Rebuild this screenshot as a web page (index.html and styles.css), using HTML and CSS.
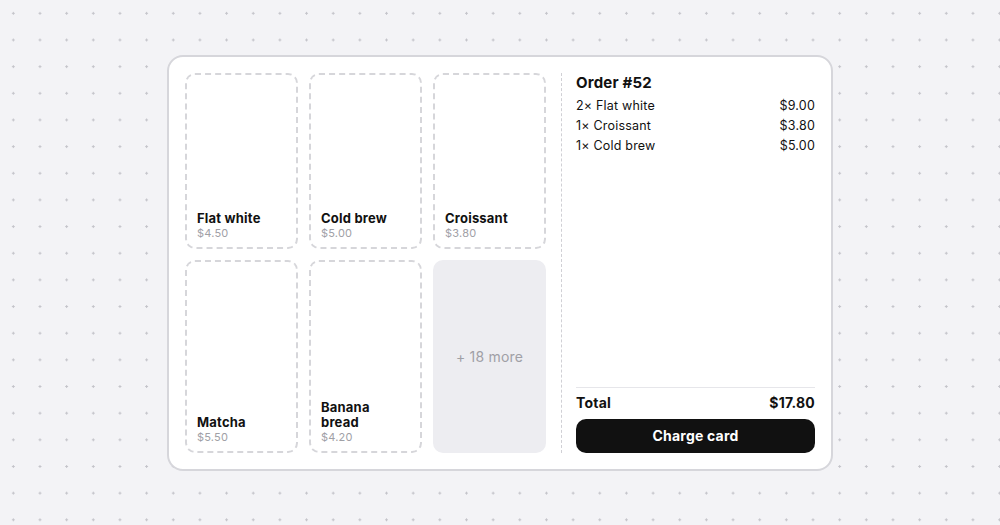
FILE: index.html
```html
<!DOCTYPE html>
<html>
<head>
  <title>POS</title>
  <link rel="stylesheet" href="styles.css">
</head>
<body>
  <div class="pos">
    <div class="tiles">
      <div class="tile"><div class="name">Flat white</div><div class="price">$4.50</div></div>
      <div class="tile"><div class="name">Cold brew</div><div class="price">$5.00</div></div>
      <div class="tile"><div class="name">Croissant</div><div class="price">$3.80</div></div>
      <div class="tile"><div class="name">Matcha</div><div class="price">$5.50</div></div>
      <div class="tile"><div class="name">Banana<br>bread</div><div class="price">$4.20</div></div>
      <div class="tile more">+ 18 more</div>
    </div>

    <div class="order">
      <h2>Order #52</h2>
      <div class="line"><span>2× Flat white</span><span>$9.00</span></div>
      <div class="line"><span>1× Croissant</span><span>$3.80</span></div>
      <div class="line"><span>1× Cold brew</span><span>$5.00</span></div>
      <div class="spacer"></div>
      <div class="total"><span>Total</span><span>$17.80</span></div>
      <button>Charge card</button>
    </div>
  </div>
</body>
</html>
```

FILE: styles.css
```css
* { box-sizing: border-box; }
html, body { margin: 0; height: 100%; }
body {
  font-family: Inter, "Noto Sans", sans-serif;
  color: #111;
  background-color: #f3f3f6;
  background-image: radial-gradient(circle, #c4c4ca 1px, transparent 1.4px);
  background-size: 26.667px 26.667px;
  display: flex; align-items: center; justify-content: center;
}
.pos {
  width: 666px; height: 416px;
  background: white;
  border: 2px solid #d6d6db;
  border-radius: 16px;
  padding: 16px;
  display: flex; gap: 15px;
}
.tiles {
  width: 361px;
  display: grid;
  grid-template-columns: repeat(3, 1fr);
  grid-template-rows: 176px 1fr;
  gap: 11px;
}
.tile {
  border: 2px dashed #d6d6da;
  border-radius: 10px;
  padding: 0 10px 7px;
  display: flex; flex-direction: column; justify-content: flex-end;
}
.name { font-size: 13px; font-weight: 700; line-height: 15px; letter-spacing: 0.2px; }
.price { font-size: 11px; color: #a0a0a6; line-height: 14px; letter-spacing: 0.2px; }
.tile.more {
  border: none;
  background: #ededf1;
  align-items: center; justify-content: center;
  padding: 0;
  font-size: 14px; color: #a0a0a6; letter-spacing: 0.2px;
}
.order {
  flex: 1;
  border-left: 1.5px dashed #d0d0d5;
  padding-left: 14px;
  display: flex; flex-direction: column;
}
h2 { margin: 1px 0 5px; font-size: 15px; line-height: 17px; font-weight: 700; letter-spacing: 0.2px; }
.line { display: flex; justify-content: space-between; font-size: 12.5px; line-height: 20px; letter-spacing: 0.2px; }
.spacer { flex: 1; }
.total {
  border-top: 1px solid #e6e6ea;
  padding-top: 7px;
  display: flex; justify-content: space-between;
  font-size: 14px; font-weight: 700; line-height: 16px; letter-spacing: 0.2px;
}
button {
  margin-top: 8px;
  height: 34px;
  background: #111; color: white;
  border: none; border-radius: 10px;
  font-family: inherit; font-size: 14px; font-weight: 700; letter-spacing: 0.2px;
}
```
